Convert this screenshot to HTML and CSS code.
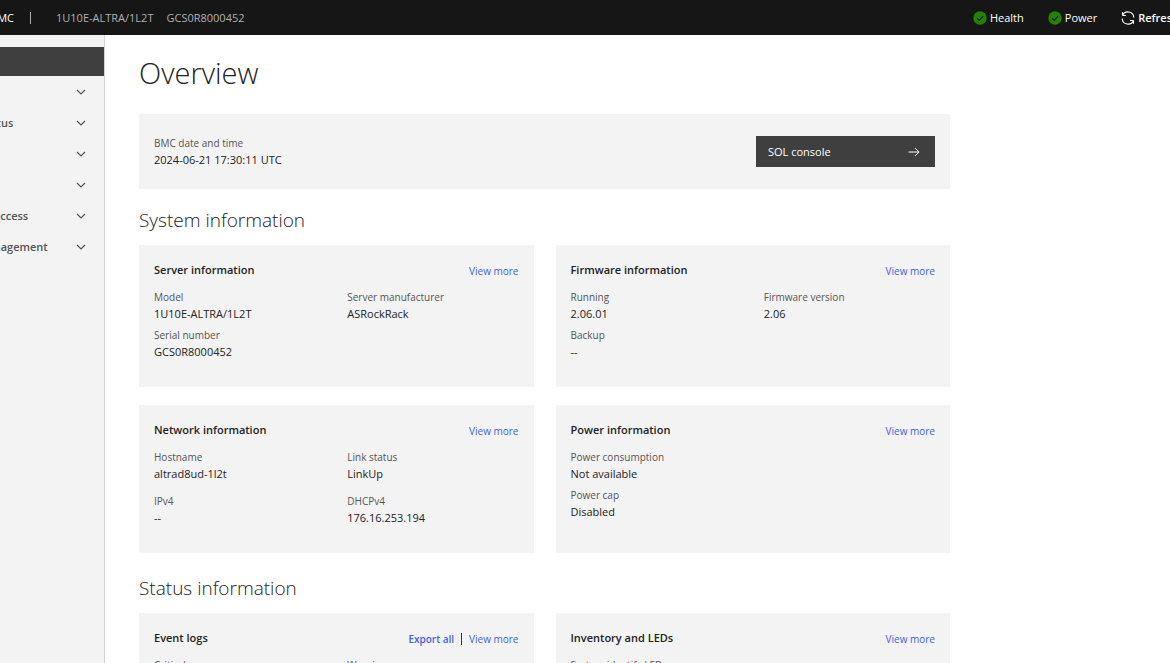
FILE: index.html
```html
<!DOCTYPE html>
<html lang="en">
  <head>
    <meta charset="utf-8">
    <meta name="viewport" content="width=device-width, initial-scale=1">
    <title>Overview</title>
    <link rel="stylesheet" href="styles.css">
  </head>
  <body>
    <!-- shared icons -->
    <svg class="sprite" aria-hidden="true">
      <symbol id="chevron" viewBox="0 0 10 6">
        <path d="M1 1l4 4 4-4" fill="none" stroke="currentColor" stroke-width="1.2"/>
      </symbol>
      <symbol id="status-ok" viewBox="0 0 14 14">
        <circle cx="7" cy="7" r="6.7" fill="#218400"/>
        <path d="M4 7.2l2.2 2.1 3.9-4.2" fill="none" stroke="#161616" stroke-width="1.2"/>
      </symbol>
    </svg>

    <header class="header">
      <div class="header__brand"><span>BMC</span></div>
      <div class="header__asset">
        <span>1U10E-ALTRA/1L2T</span>
        <span>GCS0R8000452</span>
      </div>
      <div class="header__actions">
        <a href="#logs"><svg class="icon-status"><use href="#status-ok"/></svg>Health</a>
        <a href="#power"><svg class="icon-status"><use href="#status-ok"/></svg>Power</a>
        <button type="button">
          <svg class="icon-refresh" viewBox="0 0 14 14" fill="none" stroke="currentColor" stroke-width="1.1">
            <path d="M1.5 4.5H4.9M1.5 4.5V1.2M1.5 4.5A5.9 5.9 0 0 1 12.8 6.6M12.5 9.5H9.1M12.5 9.5V12.8M12.5 9.5A5.9 5.9 0 0 1 1.2 7.4"/>
          </svg>
          Refresh
        </button>
      </div>
    </header>

    <div class="page">
      <nav class="sidebar">
        <ul class="nav">
          <li><a class="nav__item nav__item--active" href="#overview">Overview</a></li>
          <li><button class="nav__item" type="button">Logs<svg><use href="#chevron"/></svg></button></li>
          <li><button class="nav__item" type="button">Hardware status<svg><use href="#chevron"/></svg></button></li>
          <li><button class="nav__item" type="button">Operations<svg><use href="#chevron"/></svg></button></li>
          <li><button class="nav__item" type="button">Settings<svg><use href="#chevron"/></svg></button></li>
          <li><button class="nav__item" type="button">Security and access<svg><use href="#chevron"/></svg></button></li>
          <li><button class="nav__item" type="button">Resource management<svg><use href="#chevron"/></svg></button></li>
        </ul>
      </nav>

      <main class="main">
        <h1>Overview</h1>

        <div class="datebar">
          <dl>
            <dt>BMC date and time</dt>
            <dd>2024-06-21 17:30:11 UTC</dd>
          </dl>
          <button class="console" type="button">
            SOL console
            <svg viewBox="0 0 12 10" fill="none" stroke="currentColor">
              <path d="M0.5 5H11M7 1l4 4-4 4"/>
            </svg>
          </button>
        </div>

        <section>
          <h2>System information</h2>
          <div class="cards">
            <div class="card">
              <div class="card__head">
                <h3>Server information</h3>
                <div class="card__links"><a href="#inventory">View more</a></div>
              </div>
              <div class="card__cols">
                <dl>
                  <dt>Model</dt>
                  <dd>1U10E-ALTRA/1L2T</dd>
                  <dt>Serial number</dt>
                  <dd>GCS0R8000452</dd>
                </dl>
                <dl>
                  <dt>Server manufacturer</dt>
                  <dd>ASRockRack</dd>
                </dl>
              </div>
            </div>

            <div class="card">
              <div class="card__head">
                <h3>Firmware information</h3>
                <div class="card__links"><a href="#firmware">View more</a></div>
              </div>
              <div class="card__cols">
                <dl>
                  <dt>Running</dt>
                  <dd>2.06.01</dd>
                  <dt>Backup</dt>
                  <dd>--</dd>
                </dl>
                <dl>
                  <dt>Firmware version</dt>
                  <dd>2.06</dd>
                </dl>
              </div>
            </div>

            <div class="card">
              <div class="card__head">
                <h3>Network information</h3>
                <div class="card__links"><a href="#network">View more</a></div>
              </div>
              <div class="card__cols card__cols--rows">
                <dl>
                  <dt>Hostname</dt>
                  <dd>altrad8ud-1l2t</dd>
                </dl>
                <dl>
                  <dt>Link status</dt>
                  <dd>LinkUp</dd>
                </dl>
                <dl>
                  <dt>IPv4</dt>
                  <dd>--</dd>
                </dl>
                <dl>
                  <dt>DHCPv4</dt>
                  <dd>176.16.253.194</dd>
                </dl>
              </div>
            </div>

            <div class="card">
              <div class="card__head">
                <h3>Power information</h3>
                <div class="card__links"><a href="#power">View more</a></div>
              </div>
              <div class="card__cols">
                <dl>
                  <dt>Power consumption</dt>
                  <dd>Not available</dd>
                  <dt>Power cap</dt>
                  <dd>Disabled</dd>
                </dl>
              </div>
            </div>
          </div>
        </section>

        <section>
          <h2>Status information</h2>
          <div class="cards">
            <div class="card">
              <div class="card__head">
                <h3>Event logs</h3>
                <div class="card__links">
                  <a class="export" href="#export">Export all</a>
                  <a href="#logs">View more</a>
                </div>
              </div>
              <div class="card__cols">
                <dl>
                  <dt>Critical</dt>
                </dl>
                <dl>
                  <dt>Warning</dt>
                </dl>
              </div>
            </div>

            <div class="card">
              <div class="card__head">
                <h3>Inventory and LEDs</h3>
                <div class="card__links"><a href="#inventory">View more</a></div>
              </div>
              <div class="card__cols">
                <dl>
                  <dt>System identify LED</dt>
                </dl>
              </div>
            </div>
          </div>
        </section>
      </main>
    </div>
  </body>
</html>
```

FILE: styles.css
```css
* {
  box-sizing: border-box;
}

html, body {
  height: 100%;
  margin: 0;
  overflow: hidden;
}

body {
  display: flex;
  flex-direction: column;
  font-family: "Open Sans", "Noto Sans", sans-serif;
  font-size: 11px;
  line-height: 17px;
  color: #222;
  background: #fff;
}

h1, h2, h3, ul, dl, dd {
  margin: 0;
  padding: 0;
}

button {
  font: inherit;
  color: inherit;
  background: none;
  border: 0;
  padding: 0;
}

a {
  color: #445ff0;
  text-decoration: none;
}

.sprite {
  position: absolute;
  width: 0;
  height: 0;
}

/* header */
.header {
  flex: none;
  display: flex;
  align-items: center;
  height: 35px;
  color: #fff;
  background: #161616;
  white-space: nowrap;
  overflow: hidden;
}

/* brand is anchored to the divider and runs off the left edge */
.header__brand {
  display: flex;
  justify-content: flex-end;
  width: 31px;
  padding-right: 16px;
  border-right: 1px solid #b0b0b0;
  line-height: 12px;
}

.header__asset {
  display: flex;
  gap: 13px;
  margin-left: 25px;
  color: #b0b0b0;
}

.header__actions {
  display: flex;
  gap: 24px;
  margin-left: auto;
  margin-right: -9px;
}

.header__actions a,
.header__actions button {
  display: flex;
  align-items: center;
  gap: 3px;
  color: #fff;
}

.header__actions button {
  font-weight: 600;
}

.icon-status,
.icon-refresh {
  width: 14px;
  height: 14px;
}

/* sidebar */
.page {
  flex: 1;
  display: flex;
  min-height: 0;
}

.sidebar {
  flex: none;
  width: 105px;
  padding-top: 12px;
  background: #f3f3f3;
  border-right: 1px solid #d4d4d4;
  overflow: hidden;
}

.nav {
  margin-left: -128px;
  list-style: none;
}

.nav__item {
  display: flex;
  align-items: center;
  justify-content: space-between;
  width: 100%;
  height: 31px;
  padding: 0 18px 0 53px;
  font-weight: 600;
  color: #555;
}

.nav__item--active {
  height: 29px;
  color: #fff;
  background: #3f3f3f;
}

.nav__item svg {
  width: 10px;
  height: 6px;
}

/* content */
.main {
  flex: 1;
  max-width: 845px;
  padding: 18px 0 0 34px;
}

h1 {
  margin-bottom: 21px;
  font-size: 29px;
  font-weight: 300;
  line-height: 40px;
}

h2 {
  margin-bottom: 11px;
  font-size: 19px;
  font-weight: 300;
  line-height: 27px;
}

h3 {
  font-size: 11px;
  font-weight: 600;
  line-height: 20px;
}

dt {
  font-size: 10px;
  line-height: 16px;
  color: #555;
}

dd + dt {
  margin-top: 5px;
}

.datebar {
  display: flex;
  align-items: center;
  justify-content: space-between;
  height: 75px;
  margin-bottom: 18px;
  padding: 0 15px;
  background: #f3f3f3;
}

.console {
  display: flex;
  align-items: center;
  justify-content: space-between;
  width: 179px;
  height: 31px;
  padding: 0 15px 0 12px;
  color: #fff;
  background: #3f3f3f;
}

.console svg {
  width: 12px;
  height: 10px;
}

section {
  margin-bottom: 22px;
}

.cards {
  display: grid;
  grid-template-columns: 1fr 1fr;
  gap: 18px 22px;
}

.card {
  padding: 15px 15px 27px;
  background: #f3f3f3;
}

.card__head {
  display: flex;
  justify-content: space-between;
  margin-bottom: 7px;
}

.card__links {
  display: flex;
  align-items: center;
  font-size: 10px;
  line-height: 22px;
}

.export {
  margin-right: 7px;
  padding-right: 7px;
  border-right: 1px solid #333;
  font-weight: 600;
  line-height: 12px;
}

.card__cols {
  display: grid;
  grid-template-columns: 1fr 1fr;
  column-gap: 22px;
}

.card__cols--rows {
  row-gap: 11px;
}
```
